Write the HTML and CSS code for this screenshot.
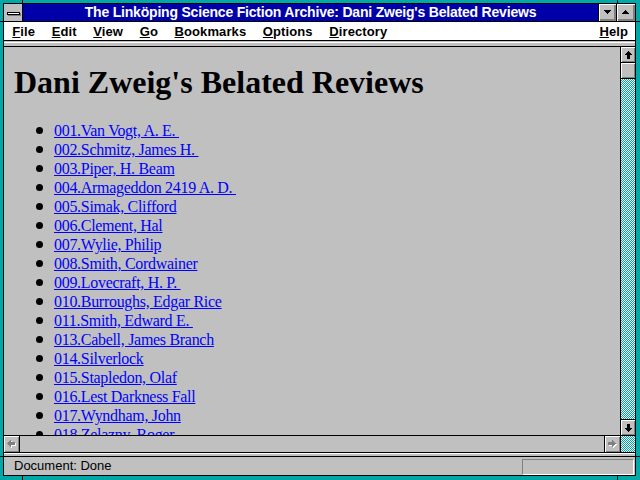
FILE: index.html
```html
<!DOCTYPE html>
<html lang="en">
<head>
<meta charset="utf-8">
<title>The Linköping Science Fiction Archive: Dani Zweig's Belated Reviews</title>
<link rel="stylesheet" href="styles.css">
</head>
<body>
<div class="window">
  <div class="titlebar">
    <div class="sysmenu"><span class="sysbar"></span></div>
    <div class="caption">The Linköping Science Fiction Archive: Dani Zweig's Belated Reviews</div>
    <div class="tbtn"><svg width="7" height="4" viewBox="0 0 7 4" shape-rendering="crispEdges"><polygon points="0,0 7,0 7,1 6,1 6,2 5,2 5,3 4,3 4,4 3,4 3,3 2,3 2,2 1,2 1,1 0,1" fill="#000"/></svg></div>
    <div class="tbtn tmax"><svg width="7" height="4" viewBox="0 0 7 4" shape-rendering="crispEdges"><polygon points="3,0 4,0 4,1 5,1 5,2 6,2 6,3 7,3 7,4 0,4 0,3 1,3 1,2 2,2 2,1 3,1" fill="#000"/></svg></div>
  </div>
  <div class="menubar">
    <span class="mi"><u>F</u>ile</span>
    <span class="mi"><u>E</u>dit</span>
    <span class="mi"><u>V</u>iew</span>
    <span class="mi"><u>G</u>o</span>
    <span class="mi"><u>B</u>ookmarks</span>
    <span class="mi"><u>O</u>ptions</span>
    <span class="mi"><u>D</u>irectory</span>
    <span class="mi help"><u>H</u>elp</span>
  </div>
  <div class="sep"></div>
  <div class="main">
    <div class="content">
      <h1>Dani Zweig's Belated Reviews</h1>
      <ul class="reviews">
        <li><a href="#">001.Van Vogt, A. E.&nbsp;</a></li>
        <li><a href="#">002.Schmitz, James H.&nbsp;</a></li>
        <li><a href="#">003.Piper, H. Beam</a></li>
        <li><a href="#">004.Armageddon 2419 A. D.&nbsp;</a></li>
        <li><a href="#">005.Simak, Clifford</a></li>
        <li><a href="#">006.Clement, Hal</a></li>
        <li><a href="#">007.Wylie, Philip</a></li>
        <li><a href="#">008.Smith, Cordwainer</a></li>
        <li><a href="#">009.Lovecraft, H. P.&nbsp;</a></li>
        <li><a href="#">010.Burroughs, Edgar Rice</a></li>
        <li><a href="#">011.Smith, Edward E.&nbsp;</a></li>
        <li><a href="#">013.Cabell, James Branch</a></li>
        <li><a href="#">014.Silverlock</a></li>
        <li><a href="#">015.Stapledon, Olaf</a></li>
        <li><a href="#">016.Lest Darkness Fall</a></li>
        <li><a href="#">017.Wyndham, John</a></li>
        <li><a href="#">018.Zelazny, Roger</a></li>
      </ul>
    </div>
    <div class="vscroll">
      <div class="sbtn up"><svg width="7" height="8" viewBox="0 0 7 8" shape-rendering="crispEdges"><polygon points="3,0 4,0 4,1 5,1 5,2 6,2 6,3 7,3 7,4 5,4 5,8 2,8 2,4 0,4 0,3 1,3 1,2 2,2 2,1 3,1" fill="#000"/></svg></div>
      <div class="sbtn thumb"></div>
      <div class="sbtn down"><svg width="7" height="8" viewBox="0 0 7 8" shape-rendering="crispEdges"><polygon points="2,0 5,0 5,4 7,4 7,5 6,5 6,6 5,6 5,7 4,7 4,8 3,8 3,7 2,7 2,6 1,6 1,5 0,5 0,4 2,4" fill="#000"/></svg></div>
    </div>
    <div class="hscroll">
      <div class="sbtn left"><svg width="9" height="8" viewBox="0 0 9 8" shape-rendering="crispEdges"><polygon transform="translate(1,1)" points="0,3 0,4 1,4 1,5 2,5 2,6 3,6 3,7 4,7 4,5 8,5 8,2 4,2 4,0 3,0 3,1 2,1 2,2 1,2 1,3" fill="#fff"/><polygon points="0,3 0,4 1,4 1,5 2,5 2,6 3,6 3,7 4,7 4,5 8,5 8,2 4,2 4,0 3,0 3,1 2,1 2,2 1,2 1,3" fill="#808080"/></svg></div>
      <div class="sbtn right"><svg width="9" height="8" viewBox="0 0 9 8" shape-rendering="crispEdges"><polygon transform="translate(1,1)" points="8,3 8,4 7,4 7,5 6,5 6,6 5,6 5,7 4,7 4,5 0,5 0,2 4,2 4,0 5,0 5,1 6,1 6,2 7,2 7,3" fill="#fff"/><polygon points="8,3 8,4 7,4 7,5 6,5 6,6 5,6 5,7 4,7 4,5 0,5 0,2 4,2 4,0 5,0 5,1 6,1 6,2 7,2 7,3" fill="#808080"/></svg></div>
    </div>
    <div class="corner"></div>
  </div>
  <div class="sep2"></div>
  <div class="status">
    <span class="stext">Document: Done</span>
    <span class="field"></span>
  </div>
</div>
</body>
</html>
```

FILE: styles.css
```css
html, body {
  margin: 0;
}
body {
  width: 640px;
  height: 480px;
  box-sizing: border-box;
  padding: 3px 4px 4px 3px;
  overflow: hidden;
  background-color: #00a8a8;
  background-image:
    linear-gradient(90deg, transparent 22px, #000 22px 23px, transparent 23px 617px, #000 617px 618px, transparent 618px),
    linear-gradient(180deg, transparent 21px, #000 21px 22px, transparent 22px 456px, #000 456px 457px, transparent 457px);
  background-size: 640px 480px;
  background-repeat: no-repeat;
}
.window {
  width: 633px;
  height: 473px;
  box-sizing: border-box;
  border: 1px solid #000;
  background: #c0c0c0;
  display: flex;
  flex-direction: column;
  font-family: "Liberation Sans", Arial, sans-serif;
}

/* title bar */
.titlebar {
  display: flex;
  height: 17px;
  border-bottom: 1px solid #000;
  flex: none;
}
.sysmenu {
  width: 18px;
  border-right: 1px solid #000;
  background: #c0c0c0;
  display: flex;
  align-items: center;
  justify-content: center;
}
.sysbar {
  display: block;
  width: 11px;
  height: 1px;
  border: 1px solid #000;
  background: #fff;
  box-shadow: 1px 1px #808080;
  margin-top: 1px;
}
.caption {
  flex: 1;
  background: #0000a8;
  color: #fff;
  font-weight: bold;
  font-size: 14px;
  letter-spacing: -0.2px;
  line-height: 17px;
  text-align: center;
  white-space: nowrap;
  overflow: hidden;
}
.tbtn {
  width: 17px;
  border-left: 1px solid #000;
  background: #c0c0c0;
  box-shadow: inset 1px 1px #fff, inset -1px -1px #808080, inset -2px -2px #808080;
  display: flex;
  align-items: center;
  justify-content: center;
}
.tbtn svg {
  margin: 0 1px 1px 0;
}
.tmax {
  width: 18px;
}

/* menu bar */
.menubar {
  flex: none;
  height: 18px;
  background: #fff;
  border-bottom: 1px solid #000;
  display: flex;
  padding: 0 7px 0 8.3px;
  font-size: 13px;
  font-weight: bold;
  line-height: 19px;
  letter-spacing: 0.1px;
  color: #000;
}
.mi {
  margin-right: 16.6px;
}
.mi u {
  text-underline-offset: 1px;
}
.help {
  margin-left: auto;
  margin-right: 0;
}

/* separators */
.sep {
  flex: none;
  height: 6px;
  box-sizing: border-box;
  border-bottom: 1px solid #000;
  background: linear-gradient(#c0c0c0 0 1px, #fff 1px 2px, #c0c0c0 2px);
}
.sep2 {
  flex: none;
  height: 5px;
  box-sizing: border-box;
  border-top: 1px solid #000;
  border-bottom: 1px solid #000;
  background: linear-gradient(#fff 0 1px, #c0c0c0 1px);
}

/* main area */
.main {
  flex: 1;
  min-height: 0;
  display: grid;
  grid-template-columns: 616px 15px;
  grid-template-rows: 1fr 17px;
}
.content {
  overflow: hidden;
  min-height: 0;
  padding-left: 10px;
  background: #c0c0c0;
  font-family: "Liberation Serif", "Times New Roman", serif;
  color: #000;
}
.content h1 {
  margin: 17px 0 21px;
  font-size: 32px;
  line-height: 36px;
  font-weight: bold;
}
.reviews {
  list-style: none;
  margin: 0;
  padding: 0 0 0 40px;
  font-size: 16px;
  line-height: 19px;
  letter-spacing: -0.3px;
}
.reviews li::before {
  content: "";
  display: inline-block;
  width: 7px;
  height: 7px;
  border-radius: 50%;
  background: #000;
  margin-left: -18px;
  margin-right: 11px;
  vertical-align: 2px;
}
.reviews a {
  color: #0000ff;
  text-decoration: underline;
}

/* scrollbars */
.dither,
.vscroll,
.corner {
  background: repeating-conic-gradient(#00a8a8 0 25%, #fff 0 50%) 0 0 / 2px 2px;
}
.vscroll {
  border-left: 1px solid #000;
  display: flex;
  flex-direction: column;
  min-height: 0;
}
.sbtn {
  height: 15px;
  background: #c0c0c0;
  box-shadow: inset 1px 1px #fff, inset -1px -1px #808080;
  display: flex;
  align-items: center;
  justify-content: center;
  flex: none;
}
.vscroll .up {
  border-bottom: 1px solid #000;
}
.vscroll .thumb {
  border-bottom: 1px solid #000;
}
.vscroll .down {
  margin-top: auto;
  border-top: 1px solid #000;
}
.hscroll {
  border-top: 1px solid #000;
  display: flex;
  background: #c0c0c0;
}
.hscroll .sbtn {
  width: 15px;
  height: 16px;
}
.hscroll .left {
  border-right: 1px solid #000;
}
.hscroll .right {
  margin-left: auto;
  border-left: 1px solid #000;
}
.corner {
  border-top: 1px solid #000;
  border-left: 1px solid #000;
}

/* status bar */
.status {
  flex: none;
  height: 18px;
  display: flex;
  align-items: flex-start;
  padding-left: 10px;
  font-size: 13px;
  line-height: 18px;
  color: #000;
}
.field {
  margin-left: auto;
  margin-top: 2px;
  margin-right: 1px;
  width: 110px;
  height: 14px;
  border: 1px solid;
  border-color: #808080 #fff #fff #808080;
}
```
